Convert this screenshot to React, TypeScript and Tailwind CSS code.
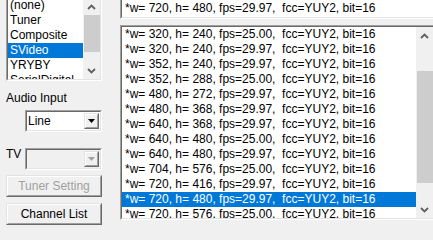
import React from "react";

const sources = ["(none)", "Tuner", "Composite", "SVideo", "YRYBY", "SerialDigital"];

const formats: [number, number, string][] = [
  [320, 240, "25.00"],
  [320, 240, "29.97"],
  [352, 240, "29.97"],
  [352, 288, "25.00"],
  [480, 272, "29.97"],
  [480, 368, "29.97"],
  [640, 368, "29.97"],
  [640, 480, "25.00"],
  [640, 480, "29.97"],
  [704, 576, "25.00"],
  [720, 416, "29.97"],
  [720, 480, "29.97"],
  [720, 576, "25.00"],
];

const fmt = (w: number, h: number, fps: string) => `*w= ${w}, h= ${h}, fps=${fps},  fcc=YUY2, bit=16`;

// classic sunken 3d edge
function Sunken({ className = "", inner = "", children }: { className?: string; inner?: string; children?: React.ReactNode }) {
  return (
    <div className={`border border-t-[#a0a0a0] border-l-[#a0a0a0] border-b-white border-r-white ${className}`}>
      <div className={`h-full border border-t-[#696969] border-l-[#696969] border-b-[#e3e3e3] border-r-[#e3e3e3] ${inner}`}>
        {children}
      </div>
    </div>
  );
}

function Raised({ className = "", inner = "", children }: { className?: string; inner?: string; children?: React.ReactNode }) {
  return (
    <div className={`border border-t-[#e3e3e3] border-l-[#e3e3e3] border-b-[#696969] border-r-[#696969] ${className}`}>
      <div className={`h-full border border-t-white border-l-white border-b-[#a0a0a0] border-r-[#a0a0a0] bg-[#f0f0f0] ${inner}`}>
        {children}
      </div>
    </div>
  );
}

function Chevron({ down = false }: { down?: boolean }) {
  return (
    <svg width="9" height="6" viewBox="0 0 9 6" className={down ? "rotate-180" : ""}>
      <polyline points="1,5 4.5,1.5 8,5" fill="none" stroke="#606060" strokeWidth="1.8" />
    </svg>
  );
}

function ScrollBar({ thumbTop, thumbHeight }: { thumbTop: number; thumbHeight: number }) {
  return (
    <div className="w-[17px] h-full bg-[#f0f0f0] flex flex-col shrink-0">
      <div className="h-[17px] flex items-center justify-center shrink-0">
        <Chevron />
      </div>
      <div className="flex-1 relative">
        <div className="absolute left-[1px] right-0 bg-[#cdcdcd]" style={{ top: thumbTop, height: thumbHeight }} />
      </div>
      <div className="h-[17px] flex items-center justify-center shrink-0">
        <Chevron down />
      </div>
    </div>
  );
}

function Combo({ value, disabled = false }: { value?: string; disabled?: boolean }) {
  return (
    <Sunken className="w-[77px] h-[22px]" inner={`flex items-center ${disabled ? "bg-[#f0f0f0]" : "bg-white"}`}>
      <div className="flex-1 pl-[1px] leading-[15px]">{value}</div>
      <Raised className="w-[15px] h-[16px] mr-[1px]" inner="flex items-center justify-center">
        <svg width="7" height="4" viewBox="0 0 7 4">
          <polygon points="0,0 7,0 3.5,4" fill={disabled ? "#a0a0a0" : "#000"} />
        </svg>
      </Raised>
    </Sunken>
  );
}

export default function App() {
  return (
    <div className="w-[433px] h-[240px] overflow-hidden bg-[#f0f0f0] flex pl-[6px] gap-[18px] font-['Liberation_Sans',Arial,sans-serif] text-[12px] text-black">
      {/* left column */}
      <div className="w-[96px] shrink-0 flex flex-col">
        <Sunken className="h-[85px] -mt-[4px]" inner="flex bg-white overflow-hidden">
          <div className="flex-1 flex flex-col">
            {sources.map((s, i) => (
              <div
                key={s}
                className={`h-[15px] shrink-0 leading-[15px] pl-[2px] whitespace-nowrap ${i === 3 ? "bg-[#0078d7] text-white" : ""}`}
              >
                {s}
              </div>
            ))}
          </div>
          <ScrollBar thumbTop={0} thumbHeight={37} />
        </Sunken>

        <div className="mt-[10px] leading-[15px]">Audio Input</div>
        <div className="mt-[4px] ml-[19px]">
          <Combo value="Line" />
        </div>

        <div className="mt-[16px] flex">
          <div className="w-[19px] leading-[12px]">TV</div>
          <Combo disabled />
        </div>

        <Raised className="mt-[5px] h-[22px]" inner="flex items-center justify-center text-[#a0a0a0]">
          Tuner Setting
        </Raised>
        <Raised className="mt-[6px] h-[22px]" inner="flex items-center justify-center">
          Channel List
        </Raised>
      </div>

      {/* right column */}
      <div className="w-[315px] shrink-0 flex flex-col">
        <Sunken className="h-[22px] -mt-[3px]" inner="bg-white pl-[3px] pt-[2px]">
          <div className="leading-[15px] whitespace-pre">{fmt(720, 480, "29.97")}</div>
        </Sunken>

        <Sunken className="mt-[6px] h-[195px]" inner="flex bg-white overflow-hidden">
          <div className="flex-1 flex flex-col">
            {formats.map(([w, h, fps], i) => (
              <div
                key={i}
                className={`h-[15px] shrink-0 leading-[15px] pl-[3px] whitespace-pre ${i === 11 ? "bg-[#0078d7] text-white" : ""}`}
              >
                {fmt(w, h, fps)}
              </div>
            ))}
          </div>
          <ScrollBar thumbTop={27} thumbHeight={112} />
        </Sunken>
      </div>
    </div>
  );
}
